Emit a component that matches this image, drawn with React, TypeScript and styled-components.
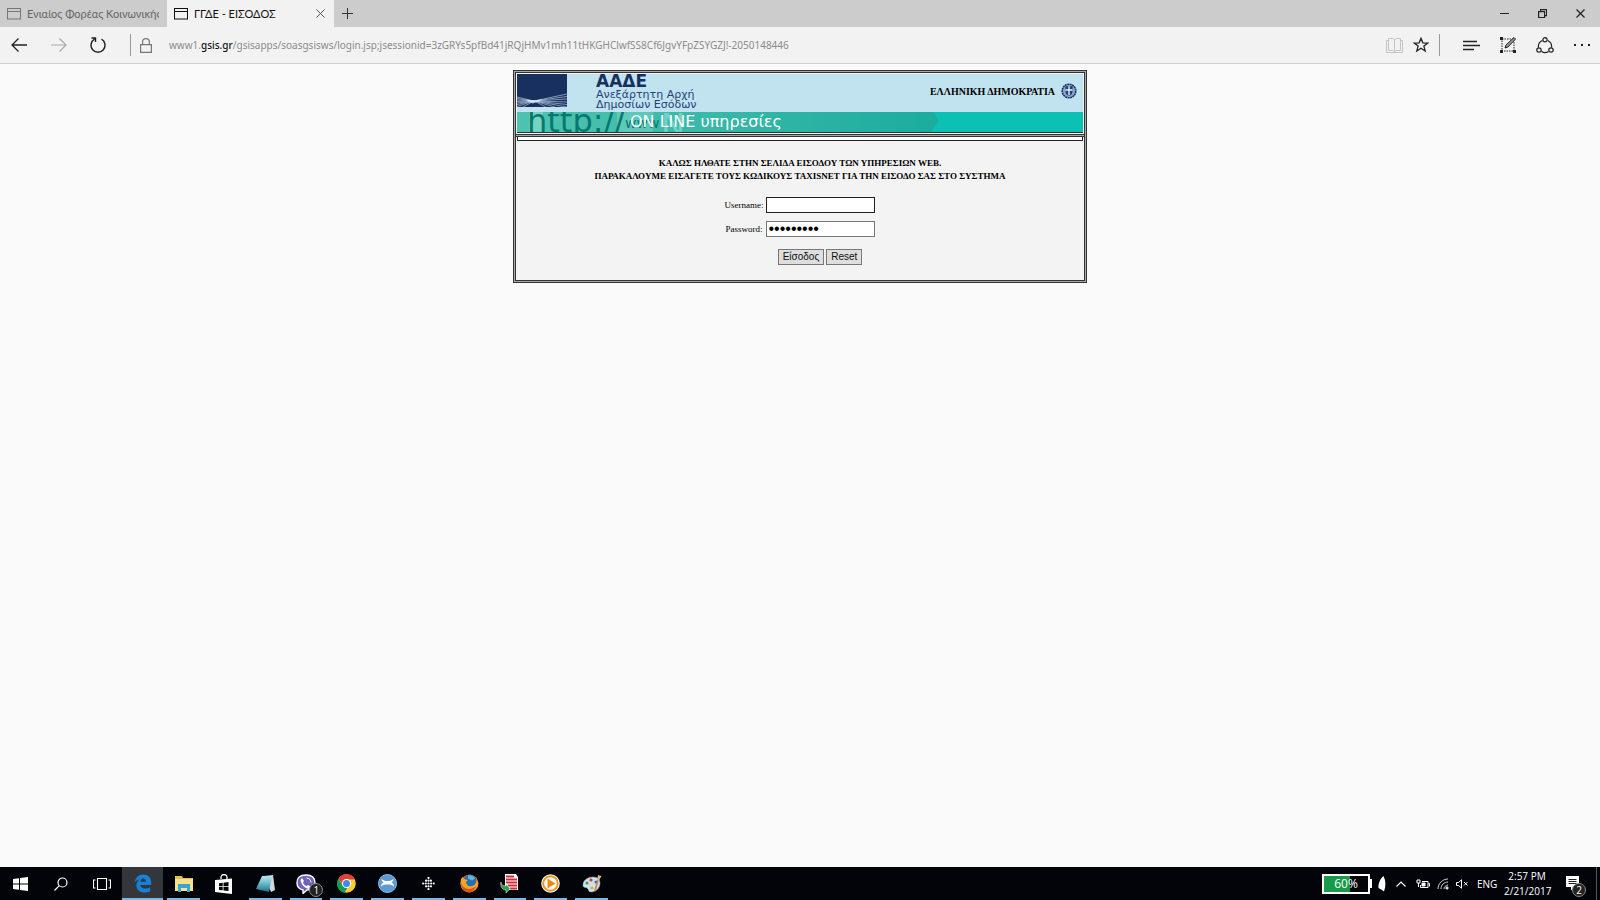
import React from 'react';
import styled, { createGlobalStyle } from 'styled-components';

const Global = createGlobalStyle`
  * { box-sizing: border-box; }
  body { margin: 0; background: #fafafa; font-family: "Open Sans", "Noto Sans", sans-serif; color: #000; }
  button { font: inherit; color: inherit; cursor: default; }
  svg { display: block; flex: none; }
`;

const Screen = styled.div`
  min-height: 100vh;
  display: flex;
  flex-direction: column;
`;

/* ---------- browser chrome ---------- */
const TabStrip = styled.header`
  display: flex;
  height: 27px;
  background: #cccccc;
`;
const Tab = styled.div<{ $active?: boolean }>`
  display: flex;
  align-items: center;
  width: 167px;
  padding: 0 8px 0 7px;
  gap: 6px;
  font-family: Lato, "Noto Sans", sans-serif;
  font-size: 11px;
  line-height: 16px;
  color: ${p => (p.$active ? '#111' : '#666')};
  background: ${p => (p.$active ? '#f2f2f2' : 'transparent')};
`;
const TabTitle = styled.span`
  flex: 1;
  min-width: 0;
  overflow: hidden;
  white-space: nowrap;
`;
const IconButton = styled.button<{ $w: number }>`
  display: flex;
  align-items: center;
  justify-content: center;
  flex: none;
  width: ${p => p.$w}px;
  height: 100%;
  padding: 0;
  border: 0;
  background: transparent;
`;
const Spacer = styled.div`flex: 1;`;

const Toolbar = styled.nav`
  display: flex;
  align-items: center;
  height: 37px;
  background: #f2f2f2;
  border-bottom: 1px solid #cfcfcf;
`;
const Divider = styled.span<{ $before: number; $after?: number }>`
  width: 1px;
  height: 22px;
  margin: 0 ${p => p.$after || 0}px 0 ${p => p.$before}px;
  background: #999;
`;
const Address = styled.div`
  flex: 1;
  min-width: 0;
  padding-left: 8px;
  font-family: "Noto Sans", sans-serif;
  font-size: 10px;
  line-height: 16px;
  color: #8c8c8c;
  white-space: nowrap;
  overflow: hidden;
  b { color: #111; font-weight: 500; }
`;

/* ---------- page ---------- */
const Page = styled.main`
  flex: 1;
  display: flex;
  justify-content: center;
  align-items: flex-start;
  padding: 6px 16px;
`;
const Panel = styled.section`
  width: 574px;
  background: linear-gradient(#f3f3f3, #f3f3f3) padding-box, #a8a8a8 border-box;
  border: 3px double #333;
  font-family: "Liberation Serif", serif;
`;
const Banner = styled.div`
  margin: 1px;
  border-bottom: 1px solid #333;
`;
const Masthead = styled.div`
  display: flex;
  height: 38px;
  background: #c0e3ef;
`;
const Agency = styled.div`
  margin-left: 29px;
  font-family: "DejaVu Sans", sans-serif;
  font-size: 11px;
  line-height: 10px;
  color: #27427a;
`;
const AgencyName = styled.strong`
  display: block;
  margin-top: -1px;
  font-size: 17px;
  line-height: 17px;
  color: #16305f;
`;
const Republic = styled.div`
  display: flex;
  align-items: center;
  gap: 6px;
  margin-left: auto;
  padding: 0 6px 4px 0;
  font-size: 10px;
  font-weight: bold;
`;
const Strip = styled.div`
  position: relative;
  height: 20px;
  overflow: hidden;
  background: #0cc1b4;
`;
const StripArt = styled.svg`
  position: absolute;
  inset: 0;
`;
const Lettering = styled.span<{ $x: number; $y: number; $size: number; $color: string }>`
  position: absolute;
  left: ${p => p.$x}px;
  top: ${p => p.$y}px;
  font-family: "DejaVu Sans", sans-serif;
  font-size: ${p => p.$size}px;
  line-height: ${p => p.$size + 4}px;
  color: ${p => p.$color};
  white-space: nowrap;
`;
const Rule = styled.div`
  height: 6px;
  border-top: 3px double #333;
  background: linear-gradient(#f3f3f3, #f3f3f3) padding-box, #a8a8a8 border-box;
  padding: 0 1px;
  &::after {
    content: "";
    display: block;
    height: 3px;
    border: 1px solid #222;
    border-top: 0;
    background: #fff;
  }
`;
const Form = styled.form`
  display: flex;
  flex-direction: column;
  align-items: center;
  padding: 17px 0 15px;
  font-size: 9px;
  line-height: 13px;
`;
const Welcome = styled.h1`
  margin: 0 0 14px;
  font-size: 9px;
  line-height: 13px;
  text-align: center;
`;
const Field = styled.div`
  display: flex;
  align-items: center;
  gap: 3px;
  margin-bottom: 8px;
`;
const TextBox = styled.input`
  width: 109px;
  height: 16px;
  padding: 0 2px;
  border: 1px solid #777;
  outline: 0;
  background: #fff;
  font-family: "Liberation Sans", sans-serif;
  font-size: 10px;
  &[type='text'] { border-color: #222; }
  &[type='password'] { font-size: 16px; }
`;
const Buttons = styled.div`
  display: flex;
  gap: 2px;
  margin: 4px 0 0 40px;
`;
const PushButton = styled.button`
  height: 16px;
  padding: 0 4px;
  border: 1px solid #777;
  background: #dedede;
  font-family: "Liberation Sans", sans-serif;
  font-size: 10px;
  line-height: 14px;
  color: #111;
`;

/* ---------- taskbar ---------- */
const Taskbar = styled.footer`
  display: flex;
  height: 33px;
  background: #02040a;
  color: #fff;
`;
const Apps = styled.div`
  display: grid;
  grid-template-columns: repeat(15, 1fr);
  width: 612px;
`;
const TaskButton = styled.button<{ $open?: boolean; $active?: boolean }>`
  position: relative;
  display: flex;
  align-items: center;
  align-self: stretch;
  justify-content: center;
  min-width: 0;
  padding: 0;
  border: 0;
  background: ${p => (p.$active ? '#33363b' : 'transparent')};
  &::after {
    content: "";
    display: ${p => (p.$open ? 'block' : 'none')};
    position: absolute;
    left: ${p => (p.$active ? 0 : 4)}px;
    right: ${p => (p.$active ? 0 : 4)}px;
    bottom: 0;
    height: 2px;
    background: #76b9ed;
  }
`;
const ActionCenter = styled(TaskButton)`
  width: 46px;
`;
const Badge = styled.span<{ $right: number }>`
  position: absolute;
  right: ${p => p.$right}px;
  bottom: 3px;
  width: 14px;
  height: 14px;
  border: 1px solid #888;
  border-radius: 7px;
  background: #222;
  font-size: 10px;
  line-height: 12px;
  text-align: center;
  color: #fff;
`;
const Tray = styled.div`
  display: flex;
  align-items: center;
  margin-left: auto;
`;
const Battery = styled.div`
  display: flex;
  align-items: center;
  margin-right: 6px;
  &::after { content: ""; width: 2px; height: 9px; background: #fff; }
`;
const Charge = styled.div`
  width: 48px;
  height: 20px;
  border: 2px solid #fff;
  background: linear-gradient(90deg, #189a48 60%, #02040a 60%);
  font-size: 12px;
  line-height: 16px;
  text-align: center;
`;
const Language = styled.span`
  width: 20px;
  margin: 0 7px 0 9px;
  font-size: 10px;
  line-height: 16px;
`;
const Clock = styled.time`
  width: 46px;
  font-size: 10px;
  line-height: 15px;
  text-align: center;
  white-space: nowrap;
`;
const Edge = styled.span`
  width: 1px;
  height: 100%;
  margin-right: 3px;
  background: #555;
`;

const Line = (p: { w: number; h: number; c?: string; s?: number; children: React.ReactNode }) => (
  <svg width={p.w} height={p.h} viewBox={`0 0 ${p.w} ${p.h}`} fill="none" stroke={p.c || '#222'} strokeWidth={p.s || 1} aria-hidden>
    {p.children}
  </svg>
);
const PageIcon = ({ c }: { c: string }) => (
  <Line w={14} h={12} c={c}><rect x=".5" y=".5" width="13" height="10.5" /><path d="M1 3.5h12" /></Line>
);

const Logo = () => (
  <svg width="50" height="34" viewBox="0 0 50 34" aria-hidden>
    <rect width="50" height="33" fill="#17305f" />
    <g stroke="#c6d9e8" strokeWidth=".6" fill="none">
      <path d="M0 23 17 27 50 20M0 24.500 17 27 50 22.500M0 26 17 27 50 25M0 27.500 17 27 50 28M0 29 17 27 50 30.500M0 30.500 17 27 50 33M0 32.500 17 27 38 33M6 33l11-6 12 6" />
    </g>
    <path d="M9 25.500l8 1 9-1.500-6 3-4 1.500-4-1.500z" fill="#dbe8f1" opacity=".8" />
  </svg>
);

const Emblem = () => (
  <svg width="16" height="16" viewBox="0 0 16 16" aria-hidden>
    <circle cx="8" cy="8" r="6.800" fill="#8ba6cc" stroke="#1d3463" strokeWidth="1.600" strokeDasharray="2 .5" />
    <path d="M4.500 3.200h7v5.300c0 2.500-2 3.800-3.500 4.500-1.500-.7-3.500-2-3.500-4.500z" fill="#1f3d7c" />
    <path d="M8 3.200v9M4.500 7h7" stroke="#eef5fb" strokeWidth="1.400" />
  </svg>
);

const icons: { name: string; open?: boolean; active?: boolean; badge?: string; art: React.ReactNode }[] = [
  { name: 'Start', art: <svg width="15" height="14" viewBox="0 0 15 14" fill="#fff"><path d="M0 2l6-.8v5.300H0zM7 1l8-1v6.500H7zM0 7.500h6v5.300L0 12zM7 7.500h8V14l-8-1z" /></svg> },
  { name: 'Search', art: <Line w={14} h={14} c="#fff" s={1.2}><circle cx="8.500" cy="5.500" r="4.500" /><path d="M5.300 8.700.5 13.500" /></Line> },
  { name: 'Task View', art: <Line w={18} h={14} c="#fff" s={1.1}><path d="M4.500 1.500h9v11h-9zM2.500 3h-2v8h2M15.500 3h2v8h-2" /></Line> },
  { name: 'Edge', open: true, active: true, art: <svg width="18" height="19" viewBox="0 0 18 19"><path fill="#1581d8" d="M.8 8.500C1.700 3.300 4.800.5 9.200.5c5 0 8 3.500 8 8.200v2.200H6.300c.2 2.500 2.400 3.700 5.200 3.700 1.800 0 3.400-.5 4.700-1.300v4c-1.600.8-3.500 1.200-5.500 1.200-5 0-8.300-2.700-8.300-7 0-2.700 1.400-5 3.800-6.200C3.500 5.600 2 6.800.8 8.500zm5.600-.8H12c0-2-1-3.300-2.700-3.300-1.600 0-2.600 1.200-2.900 3.300z" /></svg> },
  { name: 'File Explorer', open: true, art: <svg width="18" height="16" viewBox="0 0 18 16"><path fill="#e6bd55" d="M0 0h7l1 2h10v13H0z" /><path fill="#f9e08c" d="M0 3h18v12H0z" /><path fill="#3aa5d0" d="M3 8h12v8h-3v-4H6v4H3z" /></svg> },
  { name: 'Store', art: <svg width="18" height="20" viewBox="0 0 18 20"><path d="M6 5V3.500a3 3 0 016 0V5" fill="none" stroke="#fff" strokeWidth="1.300" /><path fill="#fff" d="M0 6l17-1.500V20L0 18z" /><path fill="#02040a" d="M4 9.200l3.700-.4v3.400H4zM8.500 8.700l5-.6v4.100h-5zM4 13h3.700v3.300L4 16zM8.500 13h5v4l-5-.6z" /></svg> },
  { name: 'Notepad', open: true, art: <svg width="19" height="18" viewBox="0 0 19 18"><defs><linearGradient id="pad" x2="0" y2="1"><stop stopColor="#b9e8ee" /><stop offset=".5" stopColor="#63b7c6" /><stop offset="1" stopColor="#1f6f86" /></linearGradient></defs><path fill="#cfd8da" d="M8 1l9-1 2 15-4 2z" /><path fill="url(#pad)" d="M6 1l10 0-3 16L0 14z" /></svg> },
  { name: 'Viber', open: true, badge: '1', art: <svg width="20" height="20" viewBox="0 0 20 20"><path fill="#7360b8" stroke="#fff" strokeWidth="1.400" d="M10 1c6 0 9 2 9 8 0 5-3 7-8 7l-4 3.500V16C3 15 1 13 1 9c0-6 3-8 9-8z" /><path fill="#fff" d="M6 4l2 3-1 1.500c.6 2 2 3 3.500 3.500L12 11l3 2c0 1.500-1 2-2 2C8 14 5 10 4.500 6z" /><path d="M10.500 4c3 .3 4.300 2 4.500 4.500" stroke="#fff" fill="none" /></svg> },
  { name: 'Chrome', open: true, art: <svg width="19" height="19" viewBox="0 0 19 19"><circle cx="9.500" cy="9.500" r="9.300" fill="#fc3" /><path fill="#db4437" d="M1.400 4.800A9.300 9.300 0 0118 5.500H9.500L6 11z" /><path fill="#0f9d58" d="M1.400 4.800 6 12l4.500 1.500-3 5.300A9.300 9.300 0 011.400 4.800z" /><circle cx="9.500" cy="9.500" r="4.500" fill="#fff" /><circle cx="9.500" cy="9.500" r="3.500" fill="#4285f4" /></svg> },
  { name: 'Messenger', open: true, art: <svg width="19" height="19" viewBox="0 0 19 19"><circle cx="9.500" cy="9.500" r="9" fill="#5b9ad4" stroke="#90bde5" /><path fill="#fff" d="M3 5.500c2-.5 3 1.500 5 1.500h3c2 0 3-2 5-1.500-1 1-1 2-2.500 3 1.500.5 2.500 2 2.500 4-2-1.500-3.500-2-5-2h-3c-1.500 0-3 .5-5 2 0-2 1-3.500 2.500-4C4 7.500 4 6.500 3 5.500z" /></svg> },
  { name: 'Fitbit', open: true, art: <svg width="13" height="13" viewBox="0 0 13 13" fill="#fff">{[[6.5, 0.9], [4.1, 3.7], [6.5, 3.7], [8.9, 3.7], [1.2, 6.5], [3.8, 6.5], [6.5, 6.5], [9.2, 6.5], [11.8, 6.5], [4.1, 9.3], [6.5, 9.3], [8.9, 9.3], [6.5, 12.1]].map(([x, y]) => <circle key={`${x}-${y}`} cx={x} cy={y} r="1.100" />)}</svg> },
  { name: 'Firefox', open: true, art: <svg width="19" height="19" viewBox="0 0 19 19"><circle cx="9.500" cy="9.500" r="9" fill="#e8701a" /><circle cx="10" cy="7" r="6.300" fill="#2a6cb3" /><path fill="#5fb6e4" d="M8 1.500c3-1 6 .5 7 3l-3 2-4-2z" /><path fill="#f5a623" d="M1 5l1.500-2L4 5l4 1-2 2c0 3 3 5 6 4 3-.500 4.500-3 4.500-6l1.500 3c0 5-4 9-9 9S.5 14 .5 9z" /><path fill="#d9531e" d="M1 7c0 4 3 8 8 8 3 0 5-1 7-3-1 4-4 6.500-7 6.500C4 18.500.5 14 1 7z" /></svg> },
  { name: 'PDF Converter', open: true, art: <svg width="19" height="19" viewBox="0 0 19 19"><path fill="#fff" d="M5 0h11l2 3v13H5z" /><path d="M6 2.500h8M6 5.500h11M6 8.500h11M8 11.500h9M10 14.500h7" stroke="#d42b3a" strokeWidth="1.800" /><path fill="#2e9e4f" stroke="#c9efcf" strokeWidth=".6" d="M1 8c0 3 2 4 5 4v-2l4 4.500L6 19v-3c-4 0-6-4-5-8z" /></svg> },
  { name: 'Media Player', open: true, art: <svg width="19" height="19" viewBox="0 0 19 19"><circle cx="9.500" cy="9.500" r="9.300" fill="#fff" /><circle cx="9.500" cy="9.500" r="7.300" fill="#fff" stroke="#ef9520" strokeWidth="2" /><path fill="#ef8a10" d="M6.500 4.500l8 5-8 5z" /></svg> },
  { name: 'Paint', open: true, art: <svg width="20" height="19" viewBox="0 0 20 19"><path fill="#cfe2ee" stroke="#8fb3cc" strokeWidth=".5" d="M1 11c0-5 5-8 10-8s7 3 7 6c0 5-4 9-9 9-3 0-2-3-4-4s-4 0-4-3z" /><circle cx="5" cy="9" r="1.500" fill="#3c9b45" /><circle cx="9" cy="6" r="1.600" fill="#d23b2e" /><circle cx="14" cy="8" r="1.500" fill="#2f62bd" /><circle cx="10" cy="14" r="1.600" fill="#e0b320" /><path d="M13 17l3-11" stroke="#c98a45" strokeWidth="1.800" /><path fill="#d9b98c" d="M15 6l1-5 3.500 1L17 6.500z" /></svg> },
];

export default function App() {
  return (
    <>
      <Global />
      <Screen>
        <TabStrip>
          <Tab><PageIcon c="#777" /><TabTitle>Ενιαίος Φορέας Κοινωνικής</TabTitle></Tab>
          <Tab $active>
            <PageIcon c="#111" /><TabTitle>ΓΓΔΕ - ΕΙΣΟΔΟΣ</TabTitle>
            <IconButton $w={12} aria-label="Close tab"><Line w={9} h={9} c="#555"><path d="M.5.500l8 8M8.500.5l-8 8" /></Line></IconButton>
          </Tab>
          <IconButton $w={26} aria-label="New tab"><Line w={11} h={11} c="#333"><path d="M5.500 0v11M0 5.500h11" /></Line></IconButton>
          <Spacer />
          <IconButton $w={38} aria-label="Minimize"><Line w={9} h={9}><path d="M0 4.500h9" /></Line></IconButton>
          <IconButton $w={38} aria-label="Restore"><Line w={9} h={9} s={1.2}><path d="M.6 2.600h6v6h-6zM2.600 2.600v-2h6v6h-2" /></Line></IconButton>
          <IconButton $w={39} aria-label="Close"><Line w={9} h={9} s={1.2}><path d="M.5.500l8 8M8.500.5l-8 8" /></Line></IconButton>
        </TabStrip>

        <Toolbar>
          <IconButton $w={38} aria-label="Back"><Line w={16} h={14} s={1.3}><path d="M16 7H1M7.500.5 1 7l6.500 6.500" /></Line></IconButton>
          <IconButton $w={41} aria-label="Forward"><Line w={16} h={14} c="#aaa" s={1.2}><path d="M0 7h15M8.500.5 15 7l-6.500 6.500" /></Line></IconButton>
          <IconButton $w={38} aria-label="Refresh"><Line w={16} h={16} s={1.4}><path d="M4.500 2.200a7 7 0 107 0M1.500 1h4v4" /></Line></IconButton>
          <Divider $before={13} />
          <IconButton $w={30} aria-label="Site security"><Line w={12} h={15} c="#777" s={1.2}><path d="M.6 6.600h10.800v7.800H.6zM2.600 6.600V4a3.400 3.400 0 016.800 0v2.600" /></Line></IconButton>
          <Address>www1.<b>gsis.gr</b>/gsisapps/soasgsisws/login.jsp;jsessionid=3zGRYs5pfBd41jRQjHMv1mh11tHKGHClwfSS8Cf6JgvYFpZSYGZJ!-2050148446</Address>
          <IconButton $w={26} aria-label="Reading view"><Line w={17} h={15} c="#c4c4c4"><path d="M2.500.5h4l2 1 2-1h4v12h-4l-2 1-2-1h-4zM8.500 1.500v12M2.500 2.500h-2v12h16v-12h-2" /></Line></IconButton>
          <IconButton $w={27} aria-label="Add to favorites"><Line w={16} h={16} s={1.3}><path d="M8 1.300l1.800 4.500 5 .2-3.900 3.100 1.300 4.900L8 11.300 3.800 14l1.300-4.900L1.200 6l5-.2z" /></Line></IconButton>
          <Divider $before={5} $after={12} />
          <IconButton $w={38} aria-label="Hub"><Line w={17} h={11} s={1.3}><path d="M0 1.500h14M0 5.500h17M0 9.500h11" /></Line></IconButton>
          <IconButton $w={36} aria-label="Make a web note"><Line w={16} h={16}><path d="M2 2h12v12H2z" strokeDasharray="1.500 1" /><path fill="#222" stroke="none" d="M0 0h3v3H0zM0 13h3v3H0zM13 13h3v3h-3z" /><path d="M5 11l1-3 8-7.500 1.500 1.500L8 10z" fill="#999" /></Line></IconButton>
          <IconButton $w={38} aria-label="Share"><Line w={18} h={17} s={1.2}><path d="M6.500 3.500a6.500 6.500 0 00-4 7M11.500 3.500a6.500 6.500 0 014 7M5.500 14.500a6.500 6.500 0 007 0" /><circle cx="9" cy="2.800" r="2.100" /><circle cx="3" cy="13" r="2.200" /><circle cx="15" cy="13" r="2.200" /></Line></IconButton>
          <IconButton $w={36} aria-label="More"><svg width="16" height="2" viewBox="0 0 16 2"><path fill="#222" d="M0 0h2v2H0zM7 0h2v2H7zM14 0h2v2h-2z" /></svg></IconButton>
        </Toolbar>

        <Page>
          <Panel>
            <Banner>
              <Masthead>
                <Logo />
                <Agency><AgencyName>ΑΑΔΕ</AgencyName>Ανεξάρτητη Αρχή<br />Δημοσίων Εσόδων</Agency>
                <Republic>ΕΛΛΗΝΙΚΗ ΔΗΜΟΚΡΑΤΙΑ<Emblem /></Republic>
              </Masthead>
              <Strip>
                <StripArt width="566" height="20" viewBox="0 0 566 20" aria-hidden>
                  <defs><linearGradient id="teal"><stop offset="0" stopColor="#4fc3b1" /><stop offset="1" stopColor="#1bac9e" /></linearGradient></defs>
                  <path fill="url(#teal)" d="M0 0h416l6 9-8 11H0z" />
                  <path fill="#8ee0d1" opacity=".6" d="M12 0h14v20H12z" />
                  <path fill="#8ee0d1" opacity=".35" d="M100 0h36v20h-36z" />
                </StripArt>
                <Lettering $x={10} $y={-9} $size={32} $color="#08776d">http://</Lettering>
                <Lettering $x={108} $y={2} $size={14} $color="#08776d">www</Lettering>
                <Lettering $x={144} $y={-5} $size={32} $color="#74d2c4">N</Lettering>
                <Lettering $x={113} $y={0} $size={16} $color="#ffffff">ON LINE υπηρεσίες</Lettering>
              </Strip>
            </Banner>
            <Rule />
            <Form onSubmit={e => e.preventDefault()}>
              <Welcome>ΚΑΛΩΣ ΗΛΘΑΤΕ ΣΤΗΝ ΣΕΛΙΔΑ ΕΙΣΟΔΟΥ ΤΩΝ ΥΠΗΡΕΣΙΩΝ WEB.<br />ΠΑΡΑΚΑΛΟΥΜΕ ΕΙΣΑΓΕΤΕ ΤΟΥΣ ΚΩΔΙΚΟΥΣ TAXISNET ΓΙΑ ΤΗΝ ΕΙΣΟΔΟ ΣΑΣ ΣΤΟ ΣΥΣΤΗΜΑ</Welcome>
              <Field><label htmlFor="user">Username:</label><TextBox id="user" type="text" autoFocus /></Field>
              <Field><label htmlFor="pass">Password:</label><TextBox id="pass" type="password" defaultValue="123456789" /></Field>
              <Buttons><PushButton type="submit">Είσοδος</PushButton><PushButton type="reset">Reset</PushButton></Buttons>
            </Form>
          </Panel>
        </Page>

        <Taskbar>
          <Apps>
            {icons.map(i => (
              <TaskButton key={i.name} aria-label={i.name} $open={i.open} $active={i.active}>{i.art}{i.badge && <Badge $right={3}>{i.badge}</Badge>}</TaskButton>
            ))}
          </Apps>
          <Tray>
            <Battery><Charge>60%</Charge></Battery>
            <svg width="8" height="16" viewBox="0 0 8 16"><path fill="#fff" d="M5.500 0C8 5 8 10 6 15.500L4 14 .5 12C0 8 2 3 5.500 0z" /></svg>
            <IconButton $w={30} aria-label="Show hidden icons"><Line w={10} h={6} c="#fff" s={1.2}><path d="M.5 5.500 5 1l4.500 4.500" /></Line></IconButton>
            <Line w={14} h={10} c="#fff"><path d="M6 2.500h6v6H4.500V6M12.500 4.500h1v3" /><path d="M1 1h3v3H1zM2.500 4v4" /><path d="M6 4h3v3H6z" fill="#fff" /></Line>
            <IconButton $w={26} aria-label="Network"><Line w={12} h={12} c="#ccc"><path d="M1 11C1 5.500 5.500 1 11 1M4 11c0-4 3-7 7-7M7 11c0-2 2-4 4-4" /><path fill="#fff" d="M9 9h2v2H9z" /></Line></IconButton>
            <Line w={12} h={10} c="#fff"><path d="M.5 3.500h2L5.500.8v8.400L2.500 6.500h-2zM8 3l3.500 3.500M11.500 3 8 6.500" /></Line>
            <Language>ENG</Language>
            <Clock>2:57 PM<br />2/21/2017</Clock>
            <ActionCenter aria-label="Notifications"><svg width="14" height="15" viewBox="0 0 14 15"><path fill="#fff" d="M0 0h13v11H8l-3 3.500V11H0z" /><path d="M2.500 3.500h8M2.500 5.500h8M2.500 7.500h8" stroke="#222" /></svg><Badge $right={10}>2</Badge></ActionCenter>
            <Edge />
          </Tray>
        </Taskbar>
      </Screen>
    </>
  );
}
